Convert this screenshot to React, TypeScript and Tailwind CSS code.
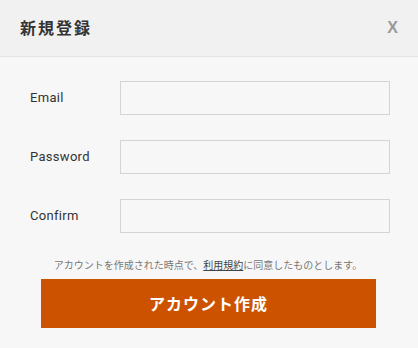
import React from 'react';

const fields = ['Email', 'Password', 'Confirm'];

export default function App() {
  return (
    <div
      className="w-[418px] h-[348px] bg-[#f7f7f7] flex flex-col"
      style={{ fontFamily: '"Noto Sans", "Noto Sans CJK JP", sans-serif' }}
    >
      {/* Header */}
      <div className="h-[57px] shrink-0 bg-[#f1f1f1] border-b border-[#e3e3e3] flex items-center justify-between pl-[20px] pr-[20px]">
        <h2 className="text-[16px] font-bold tracking-[2px] text-[#333]">新規登録</h2>
        <button className="text-[16px] font-bold text-[#9a9a9a] leading-none" style={{ fontFamily: '"Liberation Sans", sans-serif' }}>
          X
        </button>
      </div>

      {/* Form */}
      <div className="flex flex-col gap-[25px] pt-[24px] pl-[30px] pr-[28px]">
        {fields.map((f) => (
          <div key={f} className="flex items-center">
            <label className="w-[90px] text-[13px] text-[#333] tracking-[0.3px]" style={{ fontFamily: 'Roboto, sans-serif' }}>
              {f}
            </label>
            <input
              type={f === 'Email' ? 'email' : 'password'}
              className="w-[270px] h-[34px] bg-[#f7f7f7] border border-[#d4d4d4] outline-none px-2"
            />
          </div>
        ))}
      </div>

      <p className="mt-[27px] pr-[2px] text-center text-[10px] text-[#777] leading-none">
        アカウントを作成された時点で、
        <span className="underline text-[#444]">利用規約</span>
        に同意したものとします。
      </p>

      <div className="flex justify-center pr-[1px] mt-[9px]">
        <button className="w-[335px] h-[49px] bg-[#cc5200] text-white text-[16px] font-bold tracking-[1px]">
          アカウント作成
        </button>
      </div>
    </div>
  );
}
